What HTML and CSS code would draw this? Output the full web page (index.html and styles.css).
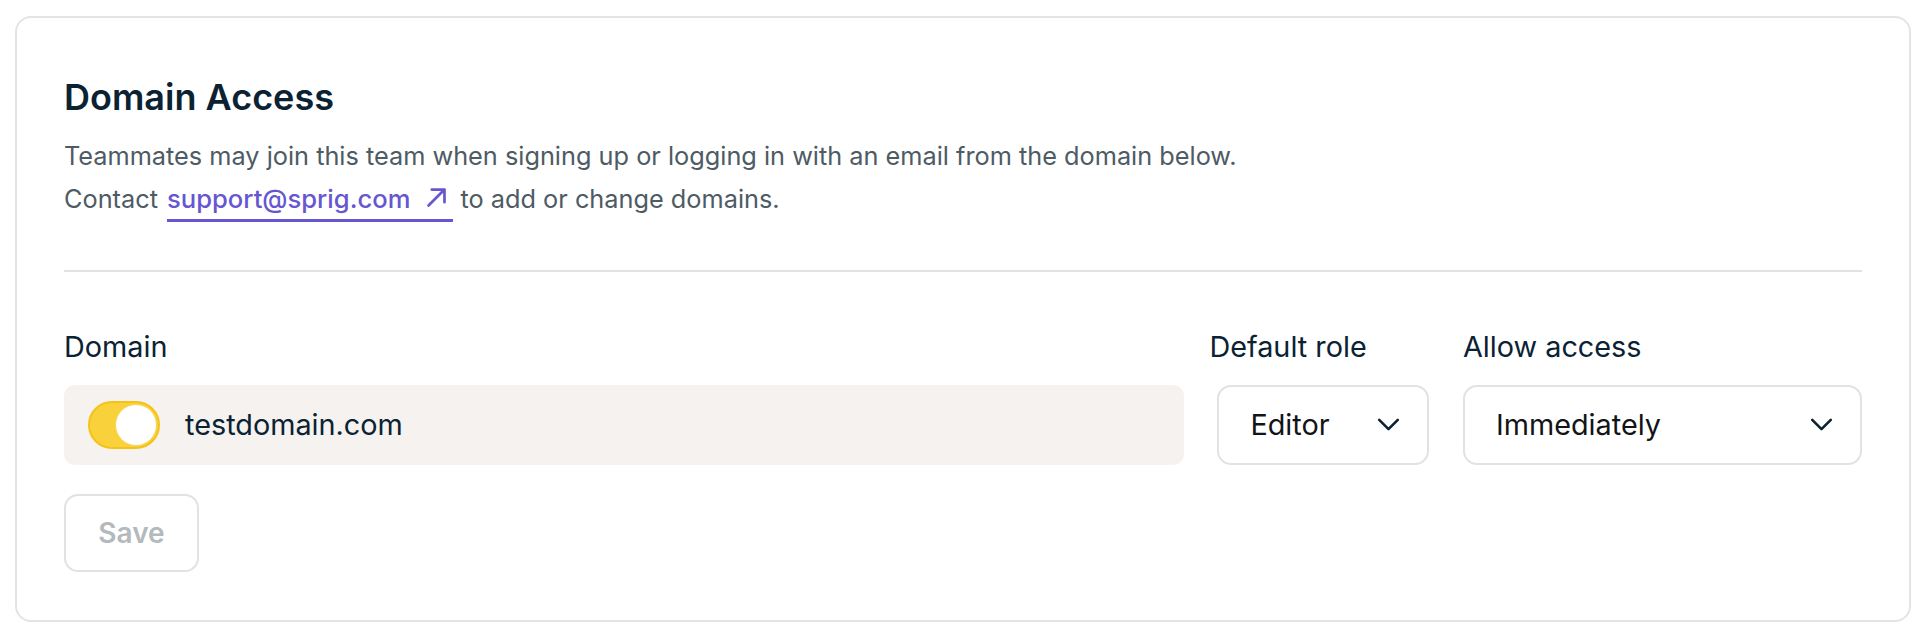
FILE: index.html
```html
<!DOCTYPE html>
<html lang="en">
<head>
<meta charset="utf-8">
<title>Domain Access</title>
<link rel="stylesheet" href="styles.css">
</head>
<body>
<section class="card">
  <h2 class="title">Domain Access</h2>
  <p class="desc">Teammates may join this team when signing up or logging in with an email from the domain below.<br>Contact <a class="link" href="#">support@sprig.com<svg class="ext" viewBox="0 0 16 16" aria-hidden="true"><path d="M3.6 12.4 L12.4 3.6 M5.4 3.6 H12.4 V10.6" fill="none" stroke="currentColor" stroke-width="1.5" stroke-linecap="round" stroke-linejoin="round"/></svg></a> to add or change domains.</p>
  <hr class="sep">
  <div class="fields">
    <div class="label">Domain</div>
    <div class="label">Default role</div>
    <div class="label">Allow access</div>

    <div class="domain-row">
      <span class="toggle"><span class="knob"></span></span>
      <span class="domain-text">testdomain.com</span>
    </div>
    <div class="select select-role">
      <span>Editor</span>
      <svg class="chev" viewBox="0 0 24 14" aria-hidden="true"><path d="M2 2 L12 12 L22 2" fill="none" stroke="currentColor" stroke-width="2.8" stroke-linecap="round" stroke-linejoin="round"/></svg>
    </div>
    <div class="select select-access">
      <span>Immediately</span>
      <svg class="chev" viewBox="0 0 24 14" aria-hidden="true"><path d="M2 2 L12 12 L22 2" fill="none" stroke="currentColor" stroke-width="2.8" stroke-linecap="round" stroke-linejoin="round"/></svg>
    </div>
  </div>
  <button class="save" type="button">Save</button>
</section>
</body>
</html>
```
FILE: styles.css
```css
html, body {
  margin: 0;
  padding: 0;
  background: #ffffff;
}

body {
  font-family: Inter, "Noto Sans", sans-serif;
  color: #0b2233;
}

.card {
  margin: 16px 17px 0 15px;
  border: 2px solid #e4e4e4;
  border-radius: 16px;
  background: #ffffff;
  padding: 58px 47px 48px 47px;
  display: flex;
  flex-direction: column;
  align-items: flex-start;
}

.title {
  margin: 0;
  font-size: 36px;
  line-height: 43.2px;
  font-weight: 600;
  color: #0b2233;
}

.desc {
  margin: 14.4px 0 0 0;
  font-size: 25.3px;
  line-height: 43.2px;
  color: #4e5b64;
}

.link {
  color: #6657d0;
  font-weight: 500;
  font-size: 25.6px;
  text-decoration: none;
  border-bottom: 3px solid #6657d0;
  padding-bottom: 5px;
  padding-right: 2px;
  margin-left: 2px;
}

.ext {
  display: inline-block;
  width: 29px;
  height: 29px;
  margin-left: 12px;
  vertical-align: -4px;
}

.sep {
  align-self: stretch;
  margin: 50px 0 0 0;
  border: none;
  height: 2px;
  background: #e2e2e2;
}

.fields {
  align-self: stretch;
  margin-top: 53px;
  display: grid;
  grid-template-columns: 1fr 228px 399px;
  column-gap: 25.6px;
  row-gap: 16.5px;
}

.label {
  font-size: 28.8px;
  line-height: 43.2px;
  color: #0b2233;
}

.domain-row {
  height: 80px;
  background: #f6f2ef;
  border-radius: 11px;
  display: flex;
  align-items: center;
  padding-left: 24px;
  gap: 25px;
}

.toggle {
  box-sizing: border-box;
  width: 72px;
  height: 48px;
  border-radius: 24px;
  background: #f9d23b;
  border: 2px solid #f3c317;
  padding: 2px;
  display: flex;
  justify-content: flex-end;
  align-items: center;
}

.knob {
  width: 40px;
  height: 40px;
  border-radius: 50%;
  background: #ffffff;
  box-shadow: 0 0 0 1px #f6d75e;
}

.domain-text {
  font-size: 28.8px;
  color: #0b2233;
}

.select {
  box-sizing: border-box;
  height: 80px;
  border: 2px solid #e2e2e2;
  border-radius: 14px;
  background: #ffffff;
  display: flex;
  align-items: center;
  justify-content: space-between;
  padding: 0 27.5px 0 31px;
  font-size: 28.8px;
  color: #121417;
}

.select-role {
  width: 212px;
  justify-self: center;
}

.chev {
  width: 23px;
  height: 13px;
  color: #0b2233;
  flex: none;
}

.save {
  margin-top: 29.3px;
  box-sizing: border-box;
  width: 135px;
  height: 78px;
  border: 2px solid #e2e2e2;
  border-radius: 14px;
  background: #ffffff;
  font-family: Inter, "Noto Sans", sans-serif;
  font-size: 28px;
  font-weight: 600;
  color: #b3b9bd;
  padding: 0;
  cursor: default;
}
```
